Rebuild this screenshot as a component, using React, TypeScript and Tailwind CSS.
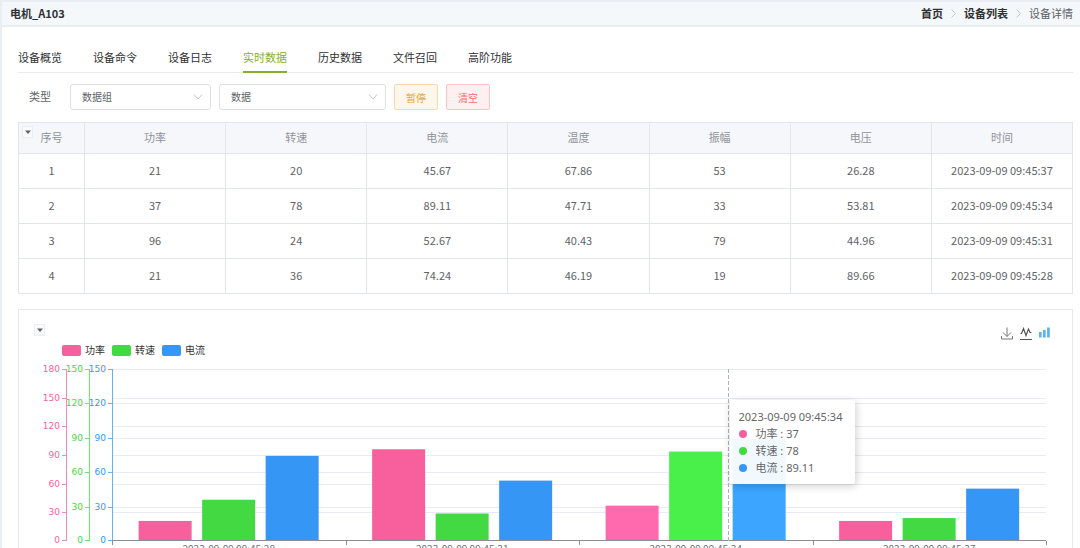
import React, { useState, useRef, useLayoutEffect } from "react";

const tabs = ["设备概览", "设备命令", "设备日志", "实时数据", "历史数据", "文件召回", "高阶功能"];

const columns = ["功率", "转速", "电流", "温度", "振幅", "电压", "时间"];

const rows = [
  ["21", "20", "45.67", "67.86", "53", "26.28", "2023-09-09 09:45:37"],
  ["37", "78", "89.11", "47.71", "33", "53.81", "2023-09-09 09:45:34"],
  ["96", "24", "52.67", "40.43", "79", "44.96", "2023-09-09 09:45:31"],
  ["21", "36", "74.24", "46.19", "19", "89.66", "2023-09-09 09:45:28"],
];

// One y axis per series, each with its own scale
const series = [
  { name: "功率", color: "#f75f9d", active: "#ff69ad", axisX: 47, max: 180, swatch: "bg-[#f75f9d]" },
  { name: "转速", color: "#43d943", active: "#49f049", axisX: 70, max: 150, swatch: "bg-[#43d943]" },
  { name: "电流", color: "#3696f5", active: "#3ba5ff", axisX: 93, max: 150, swatch: "bg-[#3696f5]" },
];

// The chart reads oldest first
const points = [...rows].reverse();
const ACTIVE = 2;

const Breadcrumb = () => (
  <nav aria-label="breadcrumb" className="flex items-center gap-2 text-[11px]">
    <a href="#home" className="font-bold text-[#303133]">首页</a>
    <Arrow />
    <a href="#devices" className="font-bold text-[#303133]">设备列表</a>
    <Arrow />
    <span className="text-[#606266]">设备详情</span>
  </nav>
);

const Arrow = () => (
  <svg width="5" height="9" viewBox="0 0 5 9" fill="none" stroke="#c0c4cc" aria-hidden="true">
    <path d="M0.5 0.5 L4.5 4.5 L0.5 8.5" />
  </svg>
);

const Select = ({ label, options, className }: { label: string; options: string[]; className: string }) => (
  <div className={`relative ${className}`}>
    <select
      aria-label={label}
      className="block h-[26px] w-full appearance-none rounded-[3px] border border-[#dcdfe6] bg-white pb-[2px] pl-[11px] pr-6 text-[10px] text-[#606266]"
    >
      {options.map((o) => (
        <option key={o}>{o}</option>
      ))}
    </select>
    <svg
      className="pointer-events-none absolute right-2 top-[10px]"
      width="10"
      height="6"
      viewBox="0 0 10 6"
      fill="none"
      stroke="#c0c4cc"
      aria-hidden="true"
    >
      <path d="M1 0.5 L5 5 L9 0.5" />
    </svg>
  </div>
);

const DropButton = ({ label }: { label: string }) => (
  <button
    aria-label={label}
    className="flex h-3 w-[11px] items-center justify-center border border-[#ebeef5] bg-[#fafafa]"
  >
    <svg width="6" height="4" viewBox="0 0 6 4" aria-hidden="true">
      <path d="M0 0.5 H6 L3 4 Z" fill="#606266" />
    </svg>
  </button>
);

const DataTable = () => (
  <table className="w-full table-fixed border-collapse text-center text-[11px] text-[#606266]">
    <thead>
      <tr className="h-[31px] bg-[#f5f7fa] text-[#909399]">
        <th className="relative w-[66px] border border-[#e2e5eb] p-0 pb-[2px] font-normal">
          <div className="absolute left-[3px] top-[3px]">
            <DropButton label="表格选项" />
          </div>
          序号
        </th>
        {columns.map((c) => (
          <th key={c} className="border border-[#e2e5eb] p-0 pb-[2px] font-normal">{c}</th>
        ))}
      </tr>
    </thead>
    <tbody>
      {rows.map((row, i) => (
        <tr key={row[6]} className="h-[35px]">
          <td className="border border-[#e2e5eb] p-0 pb-[2px]">{i + 1}</td>
          {row.map((cell, j) => (
            <td key={j} className="whitespace-nowrap border border-[#e2e5eb] p-0 pb-[2px]">{cell}</td>
          ))}
        </tr>
      ))}
    </tbody>
  </table>
);

const Toolbox = () => (
  <div className="flex items-center gap-[7px]">
    <button aria-label="保存为图片">
      <svg width="12" height="13" viewBox="0 0 12 13" fill="none" stroke="#777" className="block">
        <path d="M6 0.5 V9.5 M2 5.5 L6 9.5 L10 5.5 M0.5 9 V12 H11.5 V9" />
      </svg>
    </button>
    <button aria-label="切换为折线图">
      <svg width="12" height="13" viewBox="0 0 12 13" fill="none" stroke="#555" className="block">
        <path d="M0.5 6.5 H1.5 L3.5 1.5 L6 8.5 L8.5 2 L10 5.5 H11.5" strokeWidth="1.2" />
        <path d="M0 12.5 H12" />
      </svg>
    </button>
    <button aria-label="切换为柱状图">
      <svg width="11" height="13" viewBox="0 0 11 13" fill="#5fb0f5" className="block">
        <path d="M0 5 H2.6 V10.5 H0 Z M4 3 H6.7 V10.5 H4 Z M8.1 0.5 H10.8 V10.5 H8.1 Z" />
      </svg>
    </button>
  </div>
);

const Chart = () => {
  const box = useRef<HTMLDivElement>(null);
  const [width, setWidth] = useState(1000);

  useLayoutEffect(() => {
    const el = box.current;
    if (!el) return;
    const update = () => setWidth(el.clientWidth);
    update();
    const observer = new ResizeObserver(update);
    observer.observe(el);
    return () => observer.disconnect();
  }, []);

  const left = 93;
  const right = width - 26;
  const top = 11;
  const bottom = 183;
  const band = (right - left) / points.length;
  const bar = band * 0.227;
  const step = band * 0.272;
  const pointerX = Math.round(left + (right - left) * 0.66) + 0.5;
  const yOf = (value: number, max: number) => bottom - ((bottom - top) * value) / max;
  const ticks = (max: number) => Array.from({ length: max / 30 + 1 }, (_, i) => i * 30);

  return (
    <div ref={box} className="relative">
      <svg width={width} height="210" className="block" role="img" aria-label="功率 转速 电流">
        {/* split lines */}
        {[180, 150].map((max) =>
          ticks(max).slice(1).map((t) => {
            const y = Math.round(yOf(t, max)) + 0.5;
            return <line key={`${max}-${t}`} x1={left} x2={right} y1={y} y2={y} stroke="#e8ebf4" />;
          })
        )}

        {/* bars */}
        {points.map((p, i) =>
          series.map((s, j) => {
            const y = yOf(Number(p[j]), s.max);
            return (
              <rect
                key={s.name + i}
                x={left + band * i + band * 0.114 + step * j}
                y={y}
                width={bar}
                height={bottom - y}
                fill={i === ACTIVE ? s.active : s.color}
              />
            );
          })
        )}

        {/* y axes */}
        {series.map((s) => (
          <g key={s.name} stroke={s.color} fill={s.color} strokeOpacity="0.75">
            <line x1={s.axisX + 0.5} x2={s.axisX + 0.5} y1={top} y2={bottom} />
            {ticks(s.max).map((t) => {
              const y = Math.min(Math.round(yOf(t, s.max)), bottom - 1) + 0.5;
              return (
                <g key={t}>
                  <line x1={s.axisX - 4} x2={s.axisX} y1={y} y2={y} />
                  <text x={s.axisX - 6} y={y + 2} textAnchor="end" stroke="none" className="font-['DejaVu_Sans',sans-serif] text-[9px]">
                    {t}
                  </text>
                </g>
              );
            })}
          </g>
        ))}

        {/* x axis */}
        <line x1={left} x2={right} y1={bottom - 0.5} y2={bottom - 0.5} stroke="#8a8d96" />
        {[0, 1, 2, 3, 4].map((i) => {
          const x = Math.round(left + band * i) + 0.5;
          return <line key={i} x1={x} x2={x} y1={bottom} y2={bottom + 4} stroke="#8a8d96" />;
        })}
        {points.map((p, i) => (
          <text key={p[6]} x={left + band * (i + 0.5)} y={195} textAnchor="middle" fill="#6e7079" className="text-[10px]">
            {p[6]}
          </text>
        ))}

        <line x1={pointerX} x2={pointerX} y1={top} y2={bottom} stroke="#b0b3bb" strokeDasharray="4 2" />
      </svg>

      <div
        className="absolute top-[42px] rounded-[3px] bg-white/93 px-[9px] py-2 font-['Noto_Sans','Noto_Sans_CJK_SC',sans-serif] text-[11px] text-[#666] shadow-[1px_2px_8px_rgba(0,0,0,0.2)]"
        style={{ left: pointerX + 1 }}
      >
        <div className="whitespace-nowrap pr-1 leading-[17px]">{points[ACTIVE][6]}</div>
        {series.map((s, j) => (
          <div key={s.name} className="flex items-center leading-[17px]">
            <span className={`mr-[9px] h-2 w-2 rounded-full ${s.swatch}`} />
            {s.name} : {points[ACTIVE][j]}
          </div>
        ))}
      </div>
    </div>
  );
};

const App = () => {
  const [activeTab, setActiveTab] = useState("实时数据");

  return (
    <div className="h-screen overflow-hidden border-l-2 border-t-2 border-[#e9eef3] bg-white font-['Noto_Sans_CJK_SC',sans-serif]">
      <header className="flex h-[25px] items-center justify-between border-b-2 border-[#e9eef3] bg-[#f4f8fb] pl-2 pr-[7px]">
        <h1 className="text-[11px] font-bold text-[#303133]">电机_A103</h1>
        <Breadcrumb />
      </header>

      <main className="pl-4 pr-[7px] pt-4">
        <div role="tablist" className="flex gap-[31px] border-b border-[#e8eaee]">
          {tabs.map((tab) => (
            <button
              key={tab}
              role="tab"
              aria-selected={tab === activeTab}
              onClick={() => setActiveTab(tab)}
              className={`-mb-px h-[30px] border-b-2 text-[11px] ${
                tab === activeTab ? "border-[#84b02c] text-[#84b02c]" : "border-transparent text-[#303133]"
              }`}
            >
              {tab}
            </button>
          ))}
        </div>

        <div className="mt-[11px] flex items-center gap-2 pl-[11px]">
          <span className="mr-[11px] pb-[2px] text-[11px] text-[#606266]">类型</span>
          <Select label="类型" options={["数据组"]} className="w-[141px]" />
          <Select label="数据" options={["数据"]} className="w-[167px]" />
          <button className="h-[26px] w-11 rounded-[2px] border border-[#f5dab1] bg-[#fdf6ec] text-[10px] text-[#e6a23c]">
            暂停
          </button>
          <button className="h-[26px] w-11 rounded-[2px] border border-[#fbc4c4] bg-[#fef0f0] text-[10px] text-[#f56c6c]">
            清空
          </button>
        </div>

        <div className="mt-3">
          <DataTable />
        </div>

        <section className="mt-[15px] border border-[#e6e8ee]">
          <div className="flex items-start justify-between pl-[15px] pr-[22px] pt-[14px]">
            <DropButton label="图表选项" />
            <div className="pt-[3px]">
              <Toolbox />
            </div>
          </div>
          <div className="flex gap-[7px] pl-[43px] pt-[2px] text-[10px] leading-4 text-[#333]">
            {series.map((s) => (
              <span key={s.name} className="flex items-center gap-1">
                <span className={`h-[11px] w-[19px] rounded-[2px] ${s.swatch}`} />
                {s.name}
              </span>
            ))}
          </div>
          <Chart />
        </section>
      </main>
    </div>
  );
};

export default App;
